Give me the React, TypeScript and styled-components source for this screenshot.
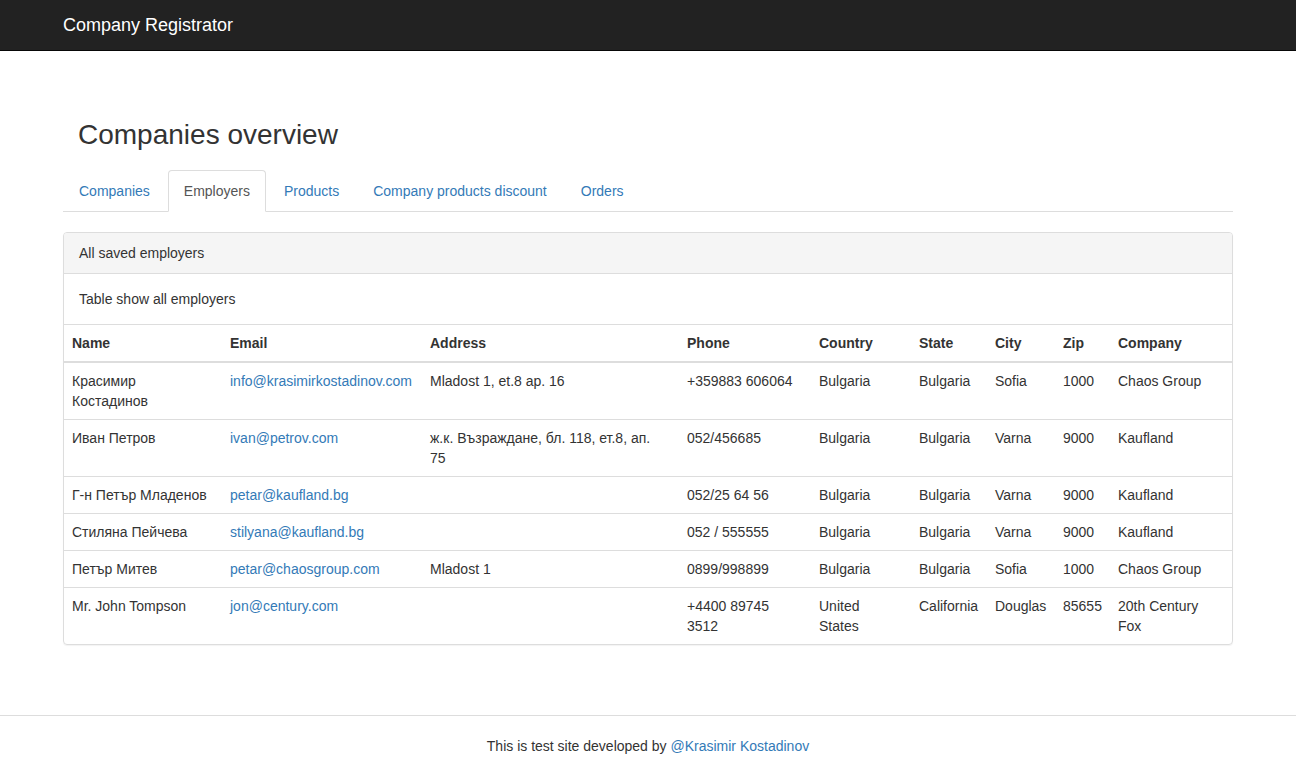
import React from "react";
import styled, { createGlobalStyle } from "styled-components";

const GlobalStyle = createGlobalStyle`
  html, body {
    margin: 0;
    padding: 0;
  }
  body {
    background: #ffffff;
    color: #333333;
    font-family: "Liberation Sans", Arial, Helvetica, sans-serif;
    font-size: 14px;
    line-height: 20px;
  }
  * {
    box-sizing: border-box;
  }
`;

const Page = styled.div`
  display: flex;
  flex-direction: column;
  min-height: 766px;
`;

const Navbar = styled.header`
  background-color: #222222;
  border-bottom: 1px solid #080808;
  height: 51px;
`;

const NavInner = styled.div`
  align-items: center;
  display: flex;
  height: 50px;
  margin: 0 auto;
  width: 1170px;
`;

const Brand = styled.a`
  color: #ffffff;
  font-size: 18px;
  line-height: 20px;
  text-decoration: none;
`;

const Main = styled.main`
  flex: 1;
  margin: 0 auto;
  padding-bottom: 70px;
  width: 1170px;
`;

const Title = styled.h1`
  font-size: 28px;
  font-weight: 500;
  line-height: 40px;
  margin: 64px 0 15px;
  padding-left: 15px;
`;

const Tabs = styled.ul`
  border-bottom: 1px solid #dddddd;
  display: flex;
  list-style: none;
  margin: 0 0 20px;
  padding: 0;
`;

const Tab = styled.li<{ $active?: boolean }>`
  margin-bottom: -1px;
  margin-right: 2px;

  a {
    background: ${(p) => (p.$active ? "#ffffff" : "transparent")};
    border: 1px solid ${(p) => (p.$active ? "#dddddd" : "transparent")};
    border-bottom-color: transparent;
    border-radius: 4px 4px 0 0;
    color: ${(p) => (p.$active ? "#555555" : "#337ab7")};
    display: block;
    line-height: 20px;
    padding: 10px 15px;
    text-decoration: none;
  }
`;

const Panel = styled.section`
  border: 1px solid #dddddd;
  border-radius: 4px;
  box-shadow: 0 1px 1px rgba(0, 0, 0, 0.05);
  overflow: hidden;
`;

const PanelHeading = styled.div`
  background-color: #f5f5f5;
  border-bottom: 1px solid #dddddd;
  padding: 10px 15px;
`;

const PanelBody = styled.div`
  padding: 15px;
`;

const Table = styled.table`
  border-collapse: collapse;
  border-spacing: 0;
  border-top: 1px solid #dddddd;
  table-layout: fixed;
  width: 100%;
`;

const Th = styled.th<{ $width: number }>`
  border-bottom: 2px solid #dddddd;
  font-weight: bold;
  padding: 8px;
  text-align: left;
  vertical-align: bottom;
  width: ${(p) => p.$width}px;
`;

const Td = styled.td`
  border-top: 1px solid #dddddd;
  padding: 8px;
  vertical-align: top;

  tr:first-child > & {
    border-top: none;
  }
`;

const AddressTd = styled(Td)`
  padding-right: 14px;
`;

const Link = styled.a`
  color: #337ab7;
  text-decoration: none;
`;

const Footer = styled.footer`
  border-top: 1px solid #dddddd;
  padding: 20px 0 10px;
  text-align: center;
`;

const columns = [
  { label: "Name", width: 158 },
  { label: "Email", width: 200 },
  { label: "Address", width: 257 },
  { label: "Phone", width: 132 },
  { label: "Country", width: 100 },
  { label: "State", width: 76 },
  { label: "City", width: 68 },
  { label: "Zip", width: 55 },
  { label: "Company", width: 122 },
];

const employers = [
  {
    name: "Красимир Костадинов",
    email: "info@krasimirkostadinov.com",
    address: "Mladost 1, et.8 ap. 16",
    phone: "+359883 606064",
    country: "Bulgaria",
    state: "Bulgaria",
    city: "Sofia",
    zip: "1000",
    company: "Chaos Group",
  },
  {
    name: "Иван Петров",
    email: "ivan@petrov.com",
    address: "ж.к. Възраждане, бл. 118, ет.8, ап. 75",
    phone: "052/456685",
    country: "Bulgaria",
    state: "Bulgaria",
    city: "Varna",
    zip: "9000",
    company: "Kaufland",
  },
  {
    name: "Г-н Петър Младенов",
    email: "petar@kaufland.bg",
    address: "",
    phone: "052/25 64 56",
    country: "Bulgaria",
    state: "Bulgaria",
    city: "Varna",
    zip: "9000",
    company: "Kaufland",
  },
  {
    name: "Стиляна Пейчева",
    email: "stilyana@kaufland.bg",
    address: "",
    phone: "052 / 555555",
    country: "Bulgaria",
    state: "Bulgaria",
    city: "Varna",
    zip: "9000",
    company: "Kaufland",
  },
  {
    name: "Петър Митев",
    email: "petar@chaosgroup.com",
    address: "Mladost 1",
    phone: "0899/998899",
    country: "Bulgaria",
    state: "Bulgaria",
    city: "Sofia",
    zip: "1000",
    company: "Chaos Group",
  },
  {
    name: "Mr. John Tompson",
    email: "jon@century.com",
    address: "",
    phone: "+4400 89745 3512",
    country: "United States",
    state: "California",
    city: "Douglas",
    zip: "85655",
    company: "20th Century Fox",
  },
];

const tabs = ["Companies", "Employers", "Products", "Company products discount", "Orders"];

export default function App() {
  return (
    <Page>
      <GlobalStyle />
      <Navbar>
        <NavInner>
          <Brand href="#">Company Registrator</Brand>
        </NavInner>
      </Navbar>
      <Main>
        <Title>Companies overview</Title>
        <Tabs>
          {tabs.map((t) => (
            <Tab key={t} $active={t === "Employers"}>
              <a href="#">{t}</a>
            </Tab>
          ))}
        </Tabs>
        <Panel>
          <PanelHeading>All saved employers</PanelHeading>
          <PanelBody>Table show all employers</PanelBody>
          <Table>
            <thead>
              <tr>
                {columns.map((c) => (
                  <Th key={c.label} $width={c.width}>
                    {c.label}
                  </Th>
                ))}
              </tr>
            </thead>
            <tbody>
              {employers.map((e) => (
                <tr key={e.email}>
                  <Td>{e.name}</Td>
                  <Td>
                    <Link href="#">{e.email}</Link>
                  </Td>
                  <AddressTd>{e.address}</AddressTd>
                  <Td>{e.phone}</Td>
                  <Td>{e.country}</Td>
                  <Td>{e.state}</Td>
                  <Td>{e.city}</Td>
                  <Td>{e.zip}</Td>
                  <Td>{e.company}</Td>
                </tr>
              ))}
            </tbody>
          </Table>
        </Panel>
      </Main>
      <Footer>
        This is test site developed by <Link href="#">@Krasimir Kostadinov</Link>
      </Footer>
    </Page>
  );
}
